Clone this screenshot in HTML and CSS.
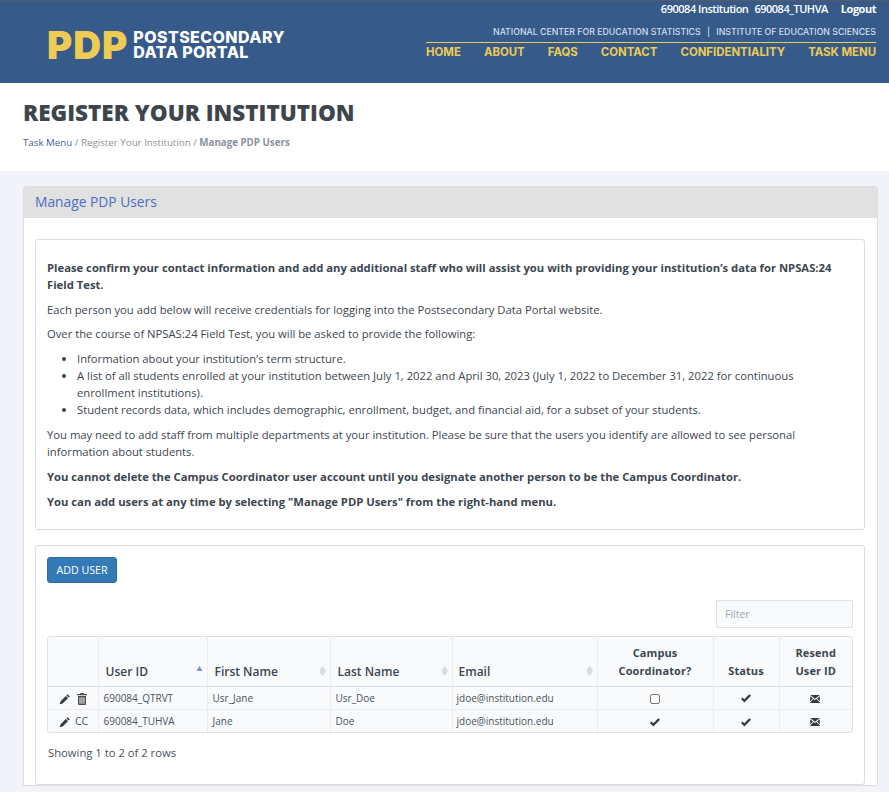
FILE: index.html
```html
<!DOCTYPE html>
<html lang="en">
<head>
<meta charset="utf-8">
<title>Manage PDP Users</title>
<link rel="stylesheet" href="styles.css">
</head>
<body>
<svg class="sprites" width="0" height="0" aria-hidden="true">
  <symbol id="i-pencil" viewBox="0 0 12 12"><path d="M8.6 1.2l2.2 2.2-1.2 1.2-2.2-2.2zM6.8 3l2.2 2.2-5.4 5.4-2.9.7.7-2.9z"/></symbol>
  <symbol id="i-trash" viewBox="0 0 10 12"><path d="M3.5 0h3l.5 1h3v1.2H0V1h3zM1 3h8v8.2l-.8.8H1.800L1 11.200zM2.500 4.200v6.600h1V4.200zm2 0v6.600h1V4.200zm2 0v6.600h1V4.200z" fill-rule="evenodd"/></symbol>
  <symbol id="i-check" viewBox="0 0 12 10"><path d="M0 5.500l1.800-1.700 2.200 2L10 0l2 1.800L4 9.800z"/></symbol>
  <symbol id="i-mail" viewBox="0 0 12 10"><path d="M0 0h12L6 4.600zM0 1.500l3.500 2.900L0 8zM12 1.500L8.500 4.400 12 8zM4.300 5L6 6.400 7.700 5 12 9.500V10H0v-.5z"/></symbol>
</svg>

<header class="site-header">
  <div class="brand">
    <span class="brand-mark">PDP</span>
    <span class="brand-name"><span class="brand-line">POSTSECONDARY</span><span class="brand-line">DATA PORTAL</span></span>
  </div>
  <div class="header-right">
    <div class="user-line"><span>690084 Institution</span><span>690084_TUHVA</span><a class="logout" href="#">Logout</a></div>
    <div class="org-line">NATIONAL CENTER FOR EDUCATION STATISTICS <span class="org-sep">|</span> INSTITUTE OF EDUCATION SCIENCES</div>
    <nav class="main-nav">
      <a href="#">HOME</a><a href="#">ABOUT</a><a href="#">FAQS</a><a href="#">CONTACT</a><a href="#">CONFIDENTIALITY</a><a href="#">TASK MENU</a>
    </nav>
  </div>
</header>

<section class="title-band">
  <h1>REGISTER YOUR INSTITUTION</h1>
  <div class="crumbs"><a href="#">Task Menu</a> / <span>Register Your Institution</span> / <strong>Manage PDP Users</strong></div>
</section>

<main class="content">
  <section class="panel">
    <h2 class="panel-head">Manage PDP Users</h2>
    <div class="panel-body">
      <div class="well intro">
        <p><b>Please confirm your contact information and add any additional staff who will assist you with providing your institution’s data for NPSAS:24 Field Test.</b></p>
        <p>Each person you add below will receive credentials for logging into the Postsecondary Data Portal website.</p>
        <p>Over the course of NPSAS:24 Field Test, you will be asked to provide the following:</p>
        <ul>
          <li>Information about your institution’s term structure.</li>
          <li>A list of all students enrolled at your institution between July 1, 2022 and April 30, 2023 (July 1, 2022 to December 31, 2022 for continuous enrollment institutions).</li>
          <li>Student records data, which includes demographic, enrollment, budget, and financial aid, for a subset of your students.</li>
        </ul>
        <p>You may need to add staff from multiple departments at your institution. Please be sure that the users you identify are allowed to see personal information about students.</p>
        <p><b>You cannot delete the Campus Coordinator user account until you designate another person to be the Campus Coordinator.</b></p>
        <p><b>You can add users at any time by selecting "Manage PDP Users" from the right-hand menu.</b></p>
      </div>
      <div class="well users">
        <button class="add-btn" type="button">ADD USER</button>
        <div class="filter-row"><input class="filter" type="text" placeholder="Filter"></div>
        <div class="table-wrap">
          <table class="user-table">
            <colgroup>
              <col class="c-act"><col class="c-id"><col class="c-first"><col class="c-last"><col class="c-mail"><col class="c-cc"><col class="c-status"><col class="c-resend">
            </colgroup>
            <thead>
              <tr>
                <th></th>
                <th class="sort asc">User ID</th>
                <th class="sort">First Name</th>
                <th class="sort">Last Name</th>
                <th class="sort">Email</th>
                <th class="mid">Campus Coordinator?</th>
                <th class="mid">Status</th>
                <th class="mid">Resend User ID</th>
              </tr>
            </thead>
            <tbody>
              <tr>
                <td class="act"><svg class="ico pencil"><use href="#i-pencil"/></svg><svg class="ico trash"><use href="#i-trash"/></svg></td>
                <td>690084_QTRVT</td><td>Usr_Jane</td><td>Usr_Doe</td><td>jdoe@institution.edu</td>
                <td class="mid"><span class="box"></span></td>
                <td class="mid"><svg class="ico check"><use href="#i-check"/></svg></td>
                <td class="mid"><svg class="ico mail"><use href="#i-mail"/></svg></td>
              </tr>
              <tr>
                <td class="act"><svg class="ico pencil"><use href="#i-pencil"/></svg><span class="cc">CC</span></td>
                <td>690084_TUHVA</td><td>Jane</td><td>Doe</td><td>jdoe@institution.edu</td>
                <td class="mid"><svg class="ico check"><use href="#i-check"/></svg></td>
                <td class="mid"><svg class="ico check"><use href="#i-check"/></svg></td>
                <td class="mid"><svg class="ico mail"><use href="#i-mail"/></svg></td>
              </tr>
            </tbody>
          </table>
        </div>
        <div class="rows-note">Showing 1 to 2 of 2 rows</div>
      </div>
    </div>
  </section>
</main>
</body>
</html>
```
FILE: styles.css
```css
* { box-sizing: border-box; }
html, body { margin: 0; height: 792px; overflow: hidden; }
body { background: #f2f3f9; color: #3c4650; font-family: "Open Sans", sans-serif; font-size: 11px; line-height: 1.42; }
a { text-decoration: none; color: inherit; }
.sprites { position: absolute; }

.site-header { height: 83px; background: #365b8b; border-top: 1px solid #555b62; display: flex; justify-content: space-between; padding: 0 13px 0 47px; }
.brand { display: flex; align-items: center; gap: 5px; height: 82px; padding-top: 6px; }
.brand-mark { font-family: Inter, sans-serif; font-weight: 900; font-size: 38.500px; line-height: 1; color: #eecb53; letter-spacing: 1px; }
.brand-name { font-family: Inter, sans-serif; font-weight: 800; font-size: 16px; color: #fff; letter-spacing: .4px; }
.brand-line { display: block; line-height: 15px; }
.header-right { width: 450px; display: flex; flex-direction: column; align-items: flex-end; }
.user-line { display: flex; gap: 6px; color: #fff; font-size: 11px; font-weight: 600; height: 18px; line-height: 15px; letter-spacing: -.48px; }
.logout { margin-left: 7px; font-weight: 700; }
.org-line { margin-top: 7px; font-family: Inter, sans-serif; font-size: 8.750px; font-weight: 500; line-height: 13px; color: #d6deea; height: 16px; white-space: nowrap; }
.org-sep { margin: 0 4px; }
.main-nav { width: 100%; border-top: 1px solid #eecb53; display: flex; justify-content: space-between; padding-top: 2px; font-family: Inter, sans-serif; font-size: 11.400px; font-weight: 700; line-height: 15px; color: #eecb53; }

.title-band { height: 88px; background: #fff; padding: 15px 23px 0; }
h1 { margin: 0; font-size: 22.500px; font-weight: 800; line-height: 30px; color: #3e464d; }
.crumbs { margin-top: 8px; font-size: 9.750px; line-height: 14px; color: #8b929a; }
.crumbs a { color: #47648f; }
.crumbs strong { font-weight: 700; }

.content { padding: 15px 11px 0 23px; }
.panel { background: #fff; border: 1px solid #dedede; border-radius: 3px 3px 0 0; }
.panel-head { margin: 0; height: 31px; background: #e1e1e1; padding: 0 11px; font-size: 13.800px; font-weight: 500; line-height: 30px; color: #4a6fc0; }
.panel-body { padding: 21px 12px 0 11px; }
.well { border: 1px solid #dcdcdc; border-radius: 3px; padding: 0 11px; background: #fff; }
.intro { height: 291px; padding-top: 19px; font-size: 11.250px; line-height: 17px; }
.intro p { margin: 0 0 7.700px; }
.intro ul { margin: 0 0 8.300px; padding-left: 30px; }
.intro b { font-weight: 700; }
.users { margin-top: 15px; padding-top: 11px; height: 240px; }
.add-btn { display: block; width: 70px; height: 26px; background: #337ab7; border: 1px solid #2e6da4; border-radius: 3px; color: #fff; font: 400 10.700px/1 "Open Sans", sans-serif; padding: 0; }
.filter-row { display: flex; justify-content: flex-end; margin-top: 17px; }
.filter { width: 137px; height: 28px; border: 1px solid #dfe1e6; border-radius: 2px; background: #f9fafc; padding: 0 8px; font: 400 10.500px "Open Sans", sans-serif; }
.filter::placeholder { color: #a3a7ad; opacity: 1; }
.table-wrap { margin-top: 8px; border: 1px solid #dfe0e3; border-radius: 3px; background: #f9fafc; }
.user-table { width: 100%; border-collapse: collapse; table-layout: fixed; font-size: 10px; }
.c-act { width: 50px; } .c-id { width: 109px; } .c-first { width: 123px; } .c-last { width: 122px; } .c-mail { width: 145px; } .c-cc { width: 116px; } .c-status { width: 66px; } .c-resend { width: 73px; }
th { height: 49px; vertical-align: bottom; text-align: left; padding: 0 6px 6px; font-size: 11px; line-height: 18px; font-weight: 700; color: #3c4650; border-left: 1px solid #ebedf1; border-bottom: 1px solid #dfe0e3; position: relative; letter-spacing: .1px; }
th.sort { font-size: 12px; letter-spacing: 0; font-weight: 600; padding: 0 7px 5px; }
th.sort:nth-child(5) { padding-left: 6px; }
th:first-child, td:first-child { border-left: 0; }
th.mid, td.mid { text-align: center; }
th.sort::after { content: ""; position: absolute; right: 4px; top: 29px; width: 6px; height: 10px; background: #d8dbe0; clip-path: polygon(50% 0, 100% 40%, 100% 60%, 50% 100%, 0 60%, 0 40%); }
th.asc::after { background: #7f8fd6; height: 5px; clip-path: polygon(50% 0, 100% 100%, 0 100%); }
td { height: 23px; padding: 0 6px 0 5px; line-height: 14px; color: #4a525a; border-left: 1px solid #ebedf1; border-top: 1px solid #ebedf1; vertical-align: middle; white-space: nowrap; }
td:nth-child(5) { padding-left: 4px; }
.act { padding: 0 0 0 11px; }
.ico { display: inline-block; vertical-align: middle; fill: #343a40; }
.pencil { width: 12px; height: 12px; }
.trash { width: 10px; height: 12px; margin-left: 6px; fill: #4c4c4c; }
.cc { margin-left: 4px; font-size: 10.500px; }
.check { width: 10px; height: 9px; }
.mail { width: 10px; height: 8px; }
.box { display: inline-block; width: 10px; height: 10px; border: 1px solid #767676; border-radius: 2px; background: #fff; vertical-align: middle; }
.rows-note { margin-top: 12px; margin-left: 1px; font-size: 11.250px; line-height: 16px; color: #4a525a; }
```
